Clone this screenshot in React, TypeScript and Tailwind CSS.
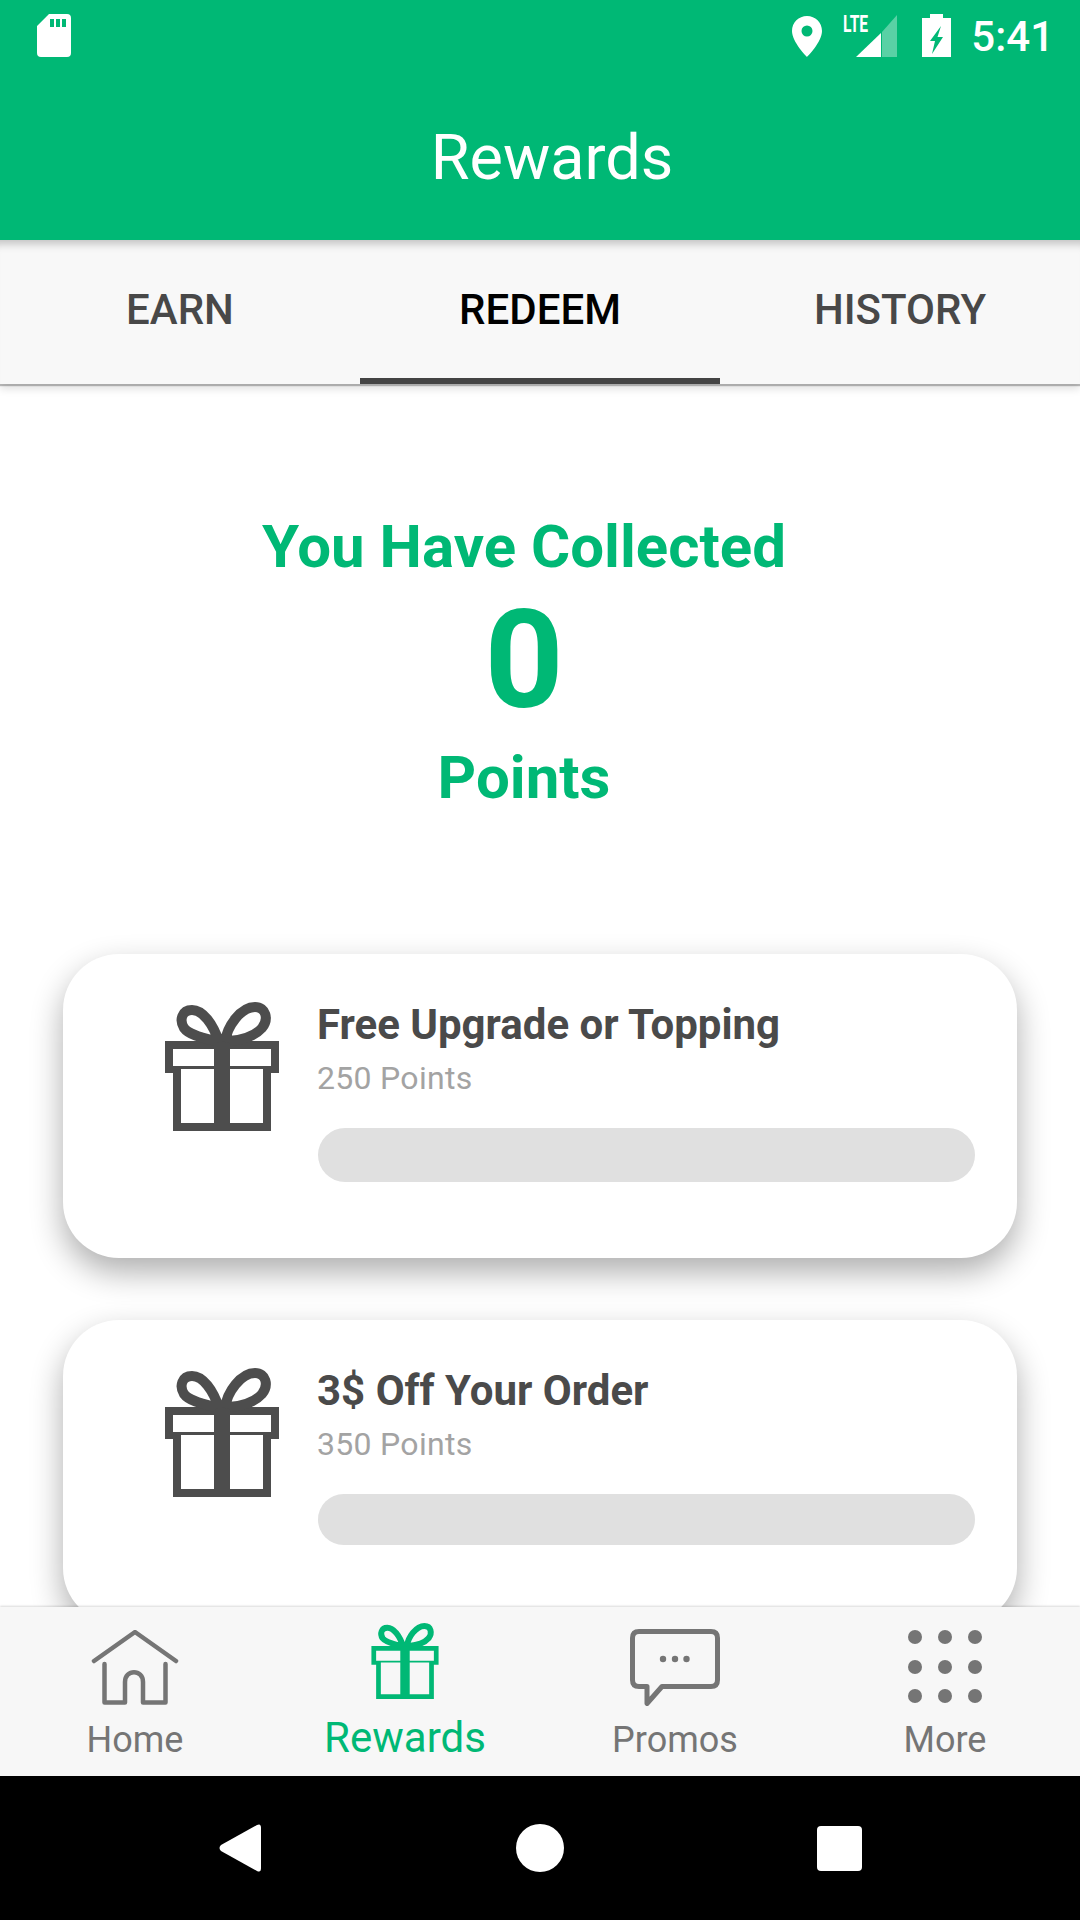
import type { ReactNode } from "react";

function GiftIcon({ className }: { className?: string }) {
  return (
    <svg viewBox="0 0 114 129" className={className} fill="none">
      <path
        fill="currentColor"
        fillRule="evenodd"
        d="M0 39H114V71H106V129H8V71H0ZM8 47V64H49V47ZM65 47V64H106V47ZM16 67V121H49V67ZM65 67V121H98V67Z"
      />
      <path
        stroke="currentColor"
        strokeWidth="10"
        d="M54 40C48 22 38 8 27 8C17 8 14 18 19 26C24 33 38 36 50 39M60 40C62 24 76 5 90 5C101 5 104 17 97 26C89 35 76 38 64 39"
      />
    </svg>
  );
}

function StatusBar() {
  return (
    <div className="flex h-[72px] items-start justify-between pl-[37px] pr-[26px] pt-[14px]">
      <svg viewBox="0 0 34 43" className="h-[43px] w-[34px]">
        <path
          fill="#fff"
          fillRule="evenodd"
          d="M12 0H30Q34 0 34 4V39Q34 43 30 43H4Q0 43 0 39V12ZM13 5V13H17V5ZM19 5V13H23V5ZM25 5V13H29V5Z"
        />
      </svg>
      <div className="flex items-start">
        <svg viewBox="0 0 30 41" className="mt-[2px] h-[41px] w-[30px]">
          <path
            fill="#fff"
            fillRule="evenodd"
            d="M15 0C6.700 0 0 6.600 0 15C0 26 15 41 15 41S30 26 30 15C30 6.600 23.300 0 15 0ZM15 9.500A5.500 5.500 0 1 1 15 20.500A5.500 5.500 0 1 1 15 9.500Z"
          />
        </svg>
        <div className="relative ml-[21px] h-[43px] w-[54px]">
          <span className="absolute left-0 top-[-2px] origin-left scale-x-[0.65] text-[24px] font-bold leading-[24px] text-white">
            LTE
          </span>
          <svg viewBox="0 0 54 43" className="h-[43px] w-[54px]">
            <path fill="#fff" d="M13 43L38 19V43Z" />
            <path fill="#fff" fillOpacity="0.35" d="M39 18L54 1V43H39Z" />
          </svg>
        </div>
        <svg viewBox="0 0 29 43" className="ml-[25px] h-[43px] w-[29px]">
          <path
            fill="#fff"
            fillRule="evenodd"
            d="M8 0H21V4H29V43H0V4H8ZM19 12L8 27H13L10 40L21 23H15.500Z"
          />
        </svg>
        <span className="ml-[20px] mt-[6px] text-[42px] font-medium leading-[34px] text-white">5:41</span>
      </div>
    </div>
  );
}

function Tabs() {
  return (
    <div className="relative flex h-[144px] shrink-0 bg-[#f8f8f8] shadow-[inset_0_12px_8px_-8px_rgba(0,0,0,0.22),0_2px_1px_rgba(0,0,0,0.25),0_5px_8px_rgba(0,0,0,0.12)]">
      <div className="flex w-[360px] items-center justify-center pb-[5px] text-[42px] font-medium text-[#484848]">
        EARN
      </div>
      <div className="flex w-[360px] items-center justify-center border-b-[6px] border-[#444444] text-[42px] font-medium text-black">
        REDEEM
      </div>
      <div className="flex w-[360px] items-center justify-center pb-[5px] text-[42px] font-medium text-[#484848]">
        HISTORY
      </div>
    </div>
  );
}

function RewardCard({ title, points, barClass }: { title: string; points: string; barClass: string }) {
  return (
    <div className="flex h-[304px] shrink-0 rounded-[56px] bg-white pl-[102px] pr-[42px] pt-[47px] shadow-[0_14px_32px_rgba(0,0,0,0.32)]">
      <GiftIcon className="mt-[1px] h-[129px] w-[114px] shrink-0 text-[#4d4d4d]" />
      <div className="ml-[38px] flex-1">
        <div className="text-[42px] font-bold leading-[48px] text-[#4a4a4a]">{title}</div>
        <div className="mt-[9px] text-[32px] leading-[40px] tracking-[0.3px] text-[#a3a3a3]">{points}</div>
        <div className={barClass} />
      </div>
    </div>
  );
}

function NavItem({
  icon,
  label,
  active,
}: {
  icon: ReactNode;
  label: string;
  active?: boolean;
}) {
  return (
    <div className="flex w-[270px] flex-col items-center">
      <div className="flex h-[83px] items-end">{icon}</div>
      <div
        className={
          active
            ? "mt-[8px] text-[42px] leading-[48px] text-[#00b875]"
            : "mt-[12px] text-[36px] leading-[44px] text-[#757575]"
        }
      >
        {label}
      </div>
    </div>
  );
}

function BottomNav() {
  return (
    <div className="relative flex h-[169px] shrink-0 bg-[#f7f7f7] pt-[16px] shadow-[0_-1px_2px_rgba(0,0,0,0.15)]">
      <NavItem
        label="Home"
        icon={
          <svg viewBox="0 0 90 76" className="h-[76px] w-[90px]" fill="none" stroke="#757575" strokeWidth="4.500" strokeLinecap="round" strokeLinejoin="round">
            <path d="M4 31L45 2L86 31" />
            <path d="M14.500 34V72.500H35V52C35 39 53 39 53 52V72.500H75.500V34" />
          </svg>
        }
      />
      <NavItem
        label="Rewards"
        active
        icon={<GiftIcon className="mb-[7px] h-[76px] w-[70px] text-[#00b875]" />}
      />
      <NavItem
        label="Promos"
        icon={
          <svg viewBox="0 0 90 77" className="h-[77px] w-[90px]" fill="none" stroke="#757575" strokeWidth="5" strokeLinejoin="round">
            <path d="M9 2.500H81Q87.500 2.500 87.500 9V51Q87.500 57.500 81 57.500H32L17 74.500V57.500H9Q2.500 57.500 2.500 51V9Q2.500 2.500 9 2.500Z" />
            <g fill="#757575" stroke="none">
              <circle cx="33" cy="30" r="3.200" />
              <circle cx="45" cy="30" r="3.200" />
              <circle cx="56.500" cy="30" r="3.200" />
            </g>
          </svg>
        }
      />
      <NavItem
        label="More"
        icon={
          <svg viewBox="0 0 74 73" className="mb-[3px] h-[73px] w-[74px]" fill="#757575">
            {[7, 37, 66].map((cy) =>
              [7, 37, 67].map((cx) => <circle key={`${cx}-${cy}`} cx={cx} cy={cy} r="7" />),
            )}
          </svg>
        }
      />
    </div>
  );
}

function SystemNav() {
  return (
    <div className="flex h-[144px] shrink-0 items-center bg-black">
      <div className="flex w-[480px] justify-end pr-[219px]">
        <svg viewBox="0 0 42 48" className="h-[48px] w-[42px]">
          <path fill="#fff" d="M38 1Q42 -1 42 4V44Q42 49 38 47L2 27Q-1 24 2 21Z" />
        </svg>
      </div>
      <div className="ml-[36px] h-[48px] w-[48px] rounded-full bg-white" />
      <div className="ml-[253px] h-[45px] w-[45px] rounded-[4px] bg-white" />
    </div>
  );
}

export default function App() {
  return (
    <div className="flex h-[1920px] w-[1080px] flex-col overflow-hidden bg-white font-[Roboto,sans-serif]">
      <div className="relative z-10 h-[240px] shrink-0 bg-[#00b875]">
        <StatusBar />
        <div className="mt-[50px] pl-[24px] text-center text-[63px] leading-[72px] text-white">Rewards</div>
      </div>
      <Tabs />
      <div className="flex min-h-0 flex-1 flex-col overflow-hidden px-[63px]">
        <div className="flex shrink-0 flex-col items-center pr-[32px] pt-[129px] font-bold text-[#00b875]">
          <div className="text-[60px] leading-[68px]">You Have Collected</div>
          <div className="mt-[5px] text-[138px] leading-[148px]">0</div>
          <div className="mt-[10px] text-[60px] leading-[68px]">Points</div>
        </div>
        <div className="mt-[142px] flex flex-col gap-[62px]">
          <RewardCard
            title="Free Upgrade or Topping"
            points="250 Points"
            barClass="ml-[1px] mt-[30px] h-[54px] rounded-full bg-[#e0e0e0]"
          />
          <RewardCard
            title="3$ Off Your Order"
            points="350 Points"
            barClass="ml-[1px] mt-[30px] h-[51px] rounded-full bg-[#e0e0e0]"
          />
        </div>
      </div>
      <BottomNav />
      <SystemNav />
    </div>
  );
}
